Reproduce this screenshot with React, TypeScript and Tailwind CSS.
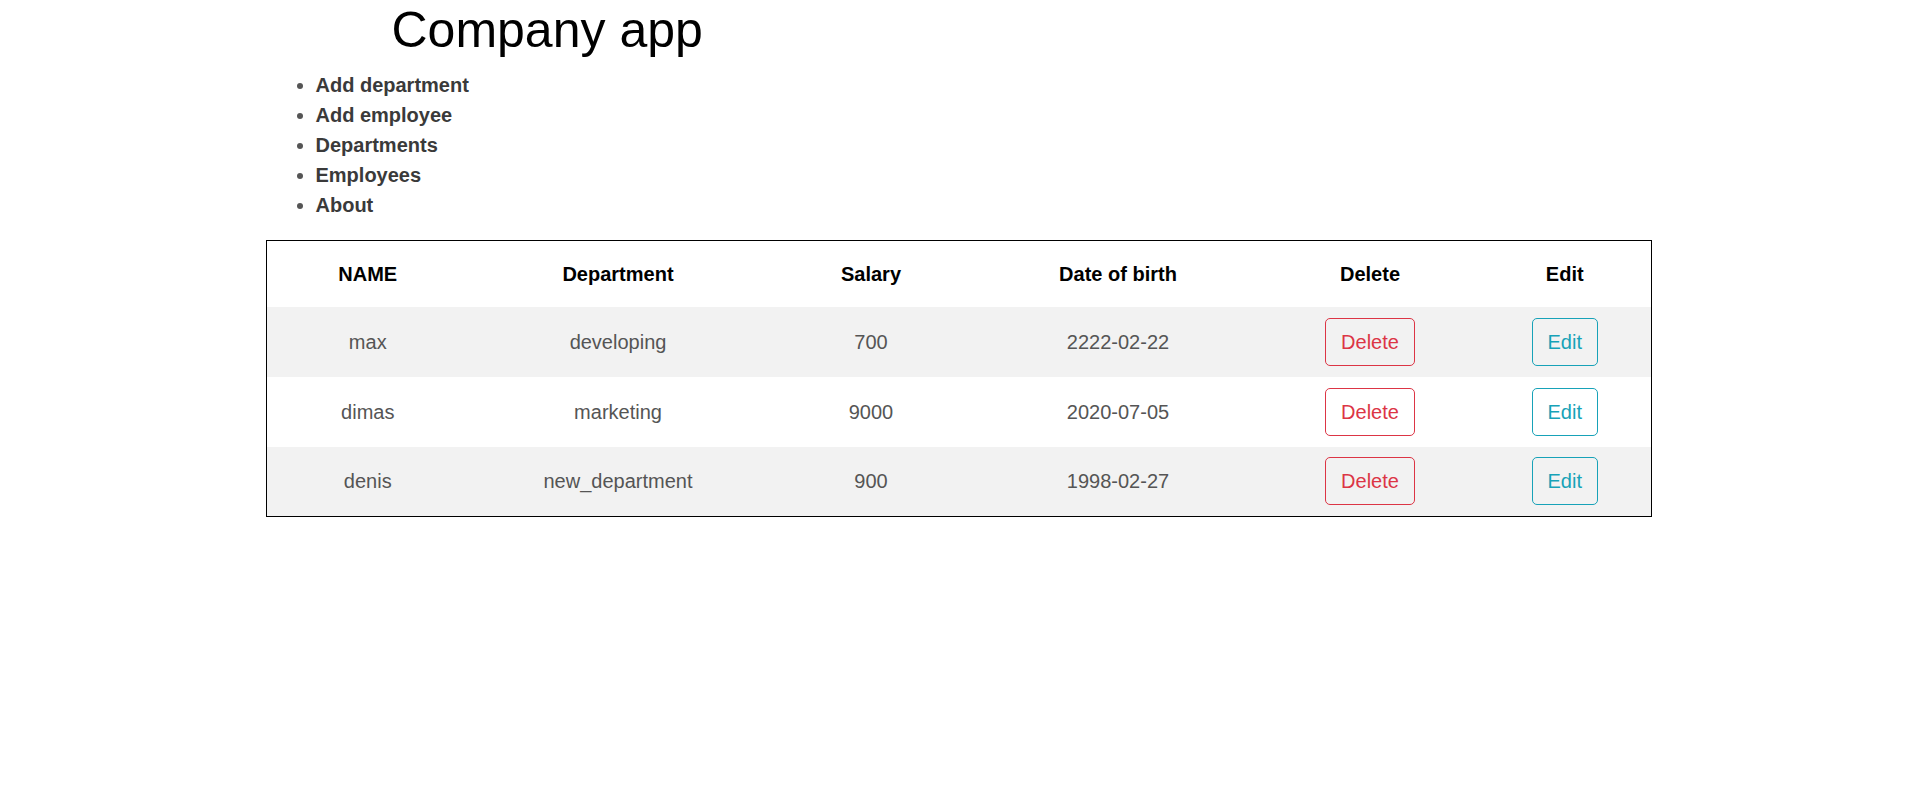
import React from "react";

type Employee = {
  name: string;
  department: string;
  salary: number;
  birth: string;
};

const employees: Employee[] = [
  { name: "max", department: "developing", salary: 700, birth: "2222-02-22" },
  { name: "dimas", department: "marketing", salary: 9000, birth: "2020-07-05" },
  { name: "denis", department: "new_department", salary: 900, birth: "1998-02-27" },
];

const links = ["Add department", "Add employee", "Departments", "Employees", "About"];

export default function App() {
  return (
    <div className="min-h-screen bg-white font-['Liberation_Sans',Arial,sans-serif]">
      <div className="w-[1386px] mx-auto">
        <h1 className="ml-[126px] text-[50px] leading-[60px] font-normal text-black mb-[10px]">
          Company app
        </h1>
        <ul className="list-disc pl-[50px] mb-[20px] text-[20px] leading-[30px] font-bold text-[#3a3a3a] marker:text-[#555]">
          {links.map((l) => (
            <li key={l}>
              <a href="#" className="text-[#3a3a3a]">
                {l}
              </a>
            </li>
          ))}
        </ul>
        <table className="w-full border border-black border-collapse text-[20px] text-center">
          <thead>
            <tr className="h-[66px]">
              <th className="w-[203px] font-bold text-black">NAME</th>
              <th className="w-[298px] font-bold text-black">Department</th>
              <th className="w-[208px] font-bold text-black">Salary</th>
              <th className="w-[286px] font-bold text-black">Date of birth</th>
              <th className="w-[218px] font-bold text-black">Delete</th>
              <th className="font-bold text-black">Edit</th>
            </tr>
          </thead>
          <tbody>
            {employees.map((e, i) => (
              <tr key={e.name} className={i % 2 === 0 ? "h-[70px] bg-[#f2f2f2]" : "h-[70px] bg-white"}>
                <td className="text-[#555]">{e.name}</td>
                <td className="text-[#555]">{e.department}</td>
                <td className="text-[#555]">{e.salary}</td>
                <td className="text-[#555]">{e.birth}</td>
                <td>
                  <button className="border border-[#dc3545] text-[#dc3545] rounded-[5px] px-[15px] py-[8px] leading-[30px] bg-transparent">
                    Delete
                  </button>
                </td>
                <td>
                  <button className="border border-[#17a2b8] text-[#17a2b8] rounded-[5px] px-[15px] py-[8px] leading-[30px] bg-transparent">
                    Edit
                  </button>
                </td>
              </tr>
            ))}
          </tbody>
        </table>
      </div>
    </div>
  );
}
